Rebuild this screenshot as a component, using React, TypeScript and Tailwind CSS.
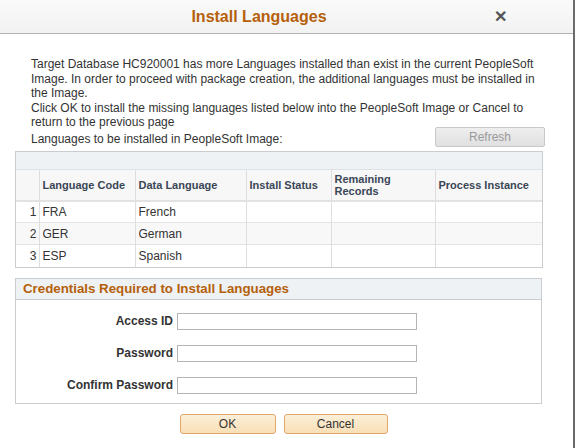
import React from "react";

const ROWS = [
  { n: 1, code: "FRA", lang: "French" },
  { n: 2, code: "GER", lang: "German" },
  { n: 3, code: "ESP", lang: "Spanish" },
];

const FIELDS = ["Access ID", "Password", "Confirm Password"];

function Field({ label }: { label: string }) {
  return (
    <div className="flex h-[17px] items-center">
      <label className="w-[161px] pr-[4px] text-right text-[12px] font-bold text-[#333]">
        {label}
      </label>
      <input
        type={label === "Access ID" ? "text" : "password"}
        className="h-[17px] w-[240px] border border-[#b4b4b4] bg-white outline-none"
      />
    </div>
  );
}

export default function App() {
  return (
    <div
      className="relative h-[448px] w-[575px] overflow-hidden border-r-2 border-[#6b6b6b] bg-white text-[#333]"
      style={{ fontFamily: '"Liberation Sans", Arial, sans-serif' }}
    >
      <header className="relative flex h-[34px] items-center justify-center border-b border-[#b0b0b0] bg-gradient-to-b from-[#fafafa] to-[#f2f2f2] pr-[55px]">
        <h1 className="text-[16px] font-bold text-[#b5600b]">Install Languages</h1>
        <button className="absolute right-[66px] top-[9px] text-[16px] font-bold leading-none text-[#555]">
          ✕
        </button>
      </header>

      <div className="pl-[31px] pr-[28px] pt-[23px] text-[12px] leading-[14.5px]">
        <p>
          Target Database HC920001 has more Languages installed than exist in the current
          PeopleSoft Image. In order to proceed with package creation, the additional
          languages must be installed in the Image.
        </p>
        <p>
          Click OK to install the missing languages listed below into the PeopleSoft Image
          or Cancel to return to the previous page
        </p>
      </div>

      <div className="-mt-[3px] flex items-end justify-between pl-[31px] pr-[28px]">
        <span className="text-[12px] leading-[14.5px]">
          Languages to be installed in PeopleSoft Image:
        </span>
        <button
          disabled
          className="h-[20px] w-[110px] rounded-[2px] border border-[#c8c8c8] bg-gradient-to-b from-[#eeeeee] to-[#e0e0e0] text-[12px] text-[#999]"
        >
          Refresh
        </button>
      </div>

      <div className="ml-[15px] mt-[4px] w-[528px] border border-[#c9cdd1]">
        <div className="h-[18px] border-b border-[#dde2e6] bg-[#eef2f4]" />
        <table className="w-full border-collapse text-[12px]">
          <colgroup>
            <col className="w-[23px]" />
            <col className="w-[96px]" />
            <col className="w-[111px]" />
            <col className="w-[85px]" />
            <col className="w-[104px]" />
            <col />
          </colgroup>
          <thead>
            <tr className="h-[31px] border-b-2 border-[#e2e2e2] bg-[#f7f7f7] text-left text-[11px] font-bold leading-[12px] text-[#3a4656]">
              <th className="border-r border-[#dedede]" />
              <th className="border-r border-[#dedede] px-[3px] font-bold">Language Code</th>
              <th className="border-r border-[#dedede] px-[3px] font-bold">Data Language</th>
              <th className="border-r border-[#dedede] px-[3px] font-bold">Install Status</th>
              <th className="border-r border-[#dedede] px-[3px] font-bold">
                Remaining
                <br />
                Records
              </th>
              <th className="px-[3px] font-bold">Process Instance</th>
            </tr>
          </thead>
          <tbody>
            {ROWS.map((r) => (
              <tr
                key={r.n}
                className={`h-[22px] border-b border-[#e3e3e3] last:border-b-0 ${
                  r.n === 2 ? "bg-[#f8f8f8]" : "bg-white"
                }`}
              >
                <td className="border-r border-[#dedede] pr-[2px] text-right">{r.n}</td>
                <td className="border-r border-[#dedede] px-[3px]">{r.code}</td>
                <td className="border-r border-[#dedede] px-[3px]">{r.lang}</td>
                <td className="border-r border-[#dedede]" />
                <td className="border-r border-[#dedede]" />
                <td />
              </tr>
            ))}
          </tbody>
        </table>
      </div>

      <section className="ml-[15px] mt-[10px] w-[527px] border border-[#c9cdd1]">
        <div className="flex h-[21px] items-center border-b border-[#c9cdd1] bg-[#eef2f4] pl-[7px]">
          <h2 className="text-[13.3px] font-bold text-[#b5600b]">
            Credentials Required to Install Languages
          </h2>
        </div>
        <div className="flex flex-col gap-[15px] pb-[9px] pt-[13px]">
          {FIELDS.map((f) => (
            <Field key={f} label={f} />
          ))}
        </div>
      </section>

      <div className="mt-[10px] flex justify-center gap-[8px] pr-[6px]">
        <button className="h-[20px] w-[96px] rounded-[3px] border border-[#e2a56c] bg-gradient-to-b from-[#fcefd8] to-[#f8dfb6] text-[12px] text-[#333]">
          OK
        </button>
        <button className="h-[20px] w-[104px] rounded-[3px] border border-[#e2a56c] bg-gradient-to-b from-[#fcefd8] to-[#f8dfb6] text-[12px] text-[#333]">
          Cancel
        </button>
      </div>
    </div>
  );
}
